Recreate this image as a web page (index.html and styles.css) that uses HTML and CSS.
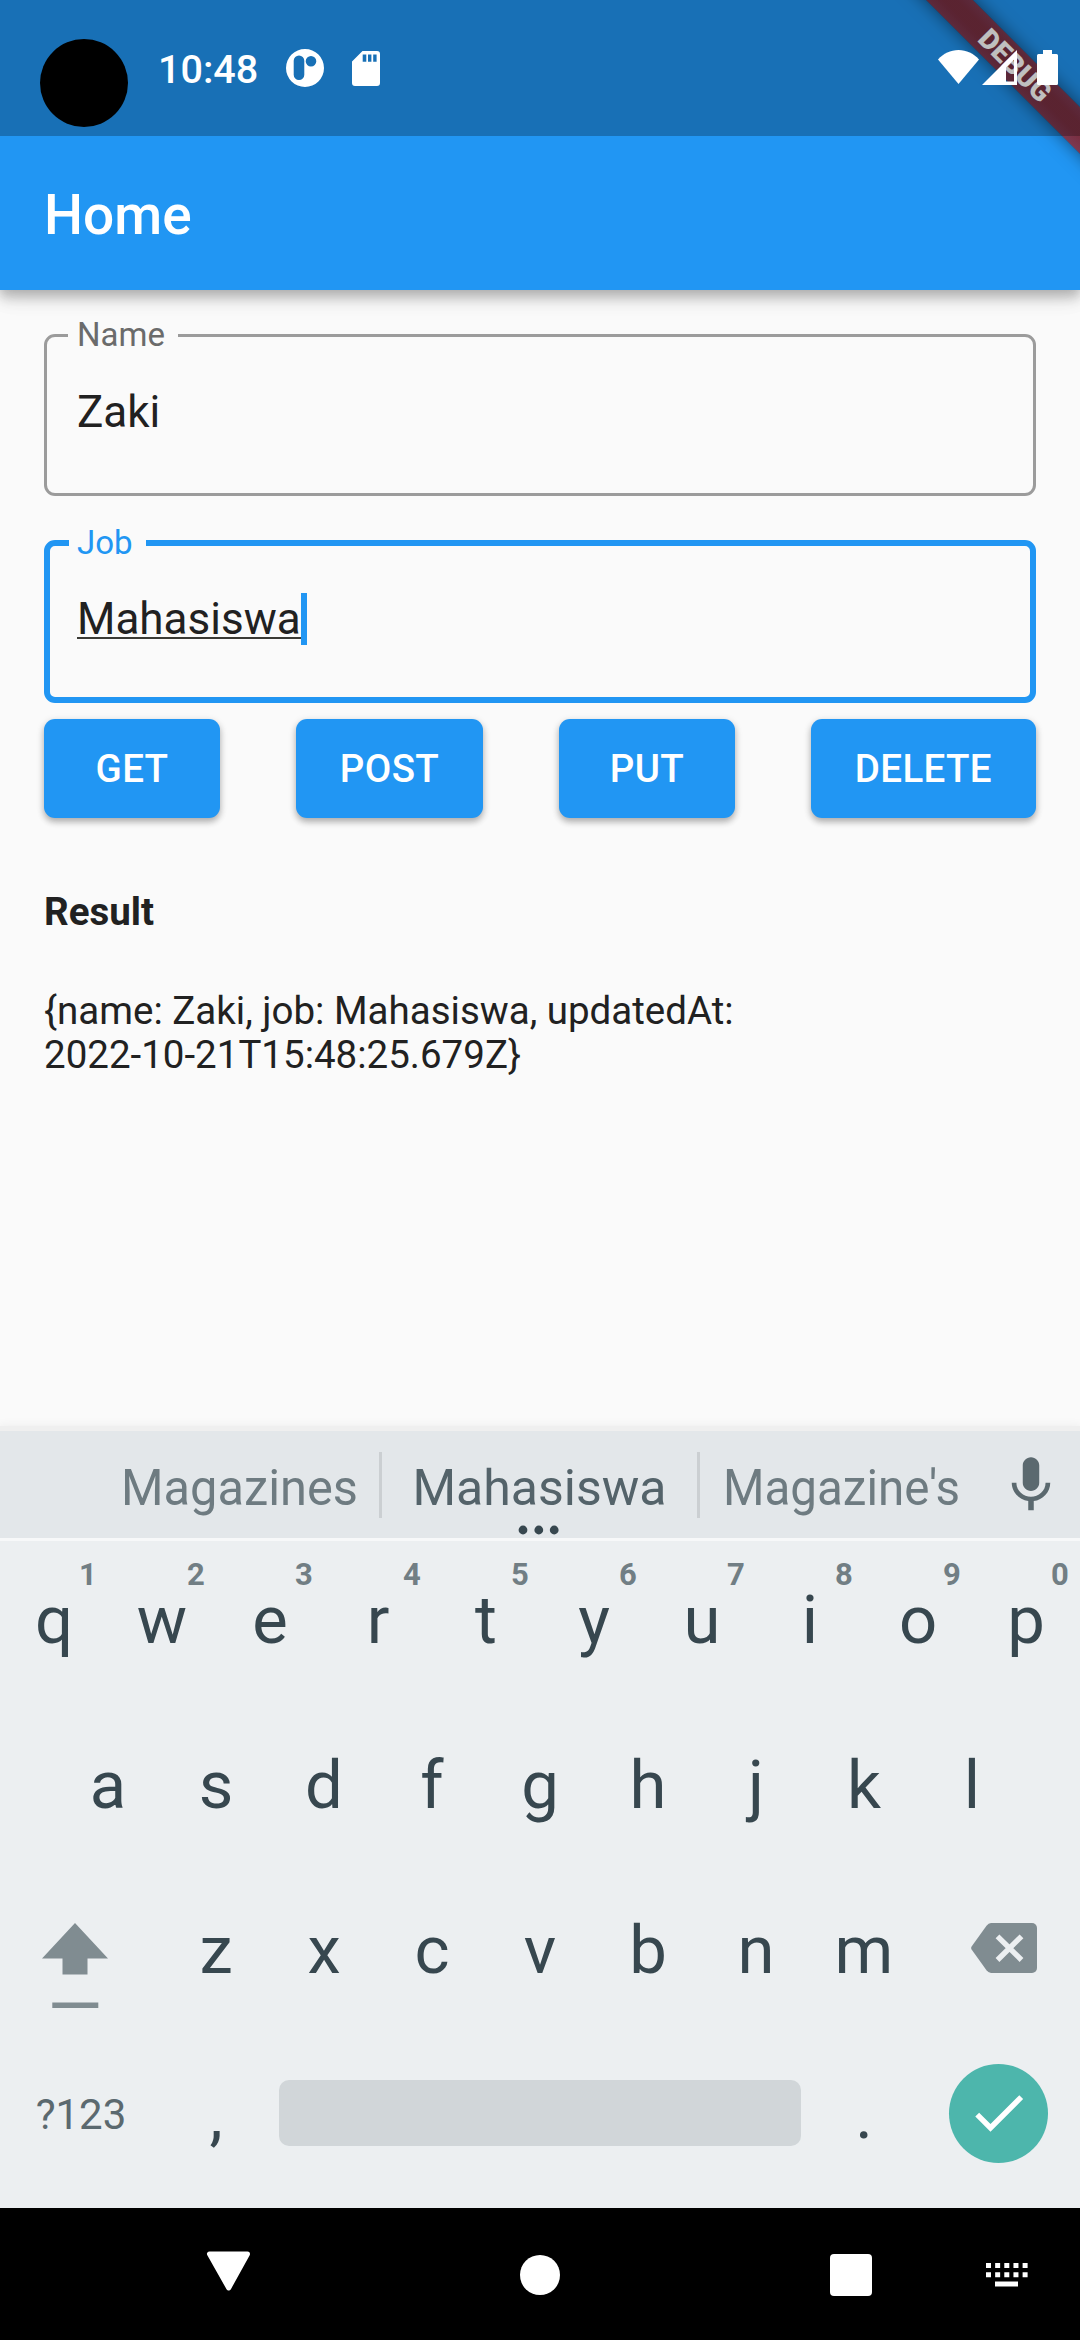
FILE: index.html
```html
<!DOCTYPE html>
<html lang="en">
<head>
<meta charset="utf-8">
<title>Home</title>
<link rel="stylesheet" href="styles.css">
</head>
<body>
<div class="screen">
  <header class="top">
    <div class="banner"><span>DEBUG</span></div>
    <div class="status">
      <i class="camera"></i>
      <span class="clock">10:48</span>
      <svg class="pocket" width="38" height="38" viewBox="0 0 38 38"><path fill="#fff" fill-rule="evenodd" d="M19 0a19 19 0 1 1 0 38a19 19 0 0 1 0-38zM13 6.500a5.300 5.300 0 0 0-5.300 5.300v14a5.300 5.300 0 0 0 10.600 0v-14A5.300 5.300 0 0 0 13 6.500zM25 6.900a5.300 5.300 0 1 0 0 10.600a5.300 5.300 0 0 0 0-10.600z"/></svg>
      <svg class="sd" width="28" height="35" viewBox="0 0 28 35"><path fill="#fff" fill-rule="evenodd" d="M10.500 0H25a3 3 0 0 1 3 3v29a3 3 0 0 1-3 3H3a3 3 0 0 1-3-3V10.500zM10.700 3.500v7.300h3.600V3.500zM16 3.500v7.300h3.400V3.500zM21.200 3.500v7.300h3.400V3.500z"/></svg>
      <div class="signals">
        <svg width="41" height="34" viewBox="0 0 41 34"><path fill="#fff" d="M20.500 34L0 9.500C5.500 3.500 12.500 0 20.500 0S35.500 3.500 41 9.500z"/></svg>
        <svg class="cell" width="35" height="35" viewBox="0 0 35 35"><path fill="#fff" fill-rule="evenodd" d="M35 0V35H0zM32 9.500L24 17.500V31.500H32z"/></svg>
        <svg class="battery" width="21" height="35" viewBox="0 0 21 35"><path fill="#fff" d="M6 0h9v4h4.500q1.500 0 1.500 1.500v28q0 1.500-1.500 1.500h-18Q0 35 0 33.500v-28Q0 4 1.500 4H6z"/></svg>
      </div>
    </div>
    <h1>Home</h1>
  </header>

  <main>
    <fieldset class="field">
      <legend>Name</legend>
      <div class="value">Zaki</div>
    </fieldset>
    <fieldset class="field focused">
      <legend>Job</legend>
      <div class="value"><span class="composing">Mahasiswa</span><i class="caret"></i></div>
    </fieldset>
    <div class="buttons">
      <button>GET</button><button>POST</button><button>PUT</button><button>DELETE</button>
    </div>
    <h2>Result</h2>
    <p>{name: Zaki, job: Mahasiswa, updatedAt:<br>2022-10-21T15:48:25.679Z}</p>
  </main>

  <section class="keyboard">
    <div class="suggestions">
      <span class="left">Magazines</span><i></i>
      <span class="best">Mahasiswa<svg class="more" width="42" height="10" viewBox="0 0 42 10"><g fill="#37474f"><circle cx="5" cy="5" r="4.400"/><circle cx="20.800" cy="5" r="4.400"/><circle cx="36.200" cy="5" r="4.400"/></g></svg></span><i></i>
      <span class="right">Magazine's</span>
      <svg class="mic" width="66" height="66" viewBox="0 0 24 24"><path fill="#5b696f" d="M12 14.500c1.660 0 2.990-1.340 2.990-3L15 5.300c0-1.660-1.340-3-3-3S9 3.640 9 5.300v6.200c0 1.660 1.340 3 3 3zm5.300-3c0 3-2.540 5.100-5.300 5.100s-5.300-2.100-5.300-5.100H5c0 3.410 2.720 6.230 6 6.720V21.500h2v-3.280c3.280-.48 6-3.300 6-6.720h-1.700z"/></svg>
    </div>
    <div class="row">
      <kbd>q<sup>1</sup></kbd><kbd>w<sup>2</sup></kbd><kbd>e<sup>3</sup></kbd><kbd>r<sup>4</sup></kbd><kbd>t<sup>5</sup></kbd><kbd>y<sup>6</sup></kbd><kbd>u<sup>7</sup></kbd><kbd>i<sup>8</sup></kbd><kbd>o<sup>9</sup></kbd><kbd>p<sup>0</sup></kbd>
    </div>
    <div class="row">
      <kbd>a</kbd><kbd>s</kbd><kbd>d</kbd><kbd>f</kbd><kbd>g</kbd><kbd>h</kbd><kbd>j</kbd><kbd>k</kbd><kbd>l</kbd>
    </div>
    <div class="row">
      <div class="side shift"><svg width="66" height="86" viewBox="0 0 66 86"><path fill="#808c91" d="M33 0L66 35.500H45.500V51.500H20.500V35.500H0zM10.300 79.500H56.300V85H10.300z"/></svg></div>
      <kbd>z</kbd><kbd>x</kbd><kbd>c</kbd><kbd>v</kbd><kbd>b</kbd><kbd>n</kbd><kbd>m</kbd>
      <div class="side erase"><svg width="66" height="50" viewBox="0 0 66 50"><path fill="#808c91" d="M20 0H61a5 5 0 0 1 5 5V45a5 5 0 0 1-5 5H20q-2.500 0-4.500-2.700L.6 26.500Q-.3 25 .6 23.500L15.500 2.700Q17.500 0 20 0z"/><path stroke="#eceff1" stroke-width="5.400" d="M26.500 13.300L50.500 37M50.500 13.300L26.500 37"/></svg></div>
    </div>
    <div class="row">
      <div class="side symbols">?123</div>
      <kbd>,</kbd>
      <div class="space"></div>
      <kbd>.</kbd>
      <div class="side enter"><div class="done"><svg width="65.300" height="65.300" viewBox="0 0 24 24"><path fill="#fff" d="M9 16.170L4.830 12l-1.420 1.410L9 19 21 7l-1.410-1.410z"/></svg></div></div>
    </div>
  </section>

  <nav>
    <svg class="back" width="46" height="41" viewBox="0 0 46 41"><path fill="#fff" stroke="#fff" stroke-width="5" stroke-linejoin="round" d="M3.500 3H41.500L22.700 37z"/></svg>
    <i class="home"></i>
    <i class="recent"></i>
    <svg class="ime" width="42" height="24" viewBox="0 0 42 24" fill="none" stroke="#fff"><path stroke-width="5" stroke-dasharray="5 4.150" d="M0 2.500H42M0 11.700H42"/><path stroke-width="5" d="M9 21H32"/></svg>
  </nav>
</div>
</body>
</html>
```
FILE: styles.css
```css
* { box-sizing: border-box; margin: 0; padding: 0; }
body { background: #fafafa; font-family: Roboto, "Liberation Sans", sans-serif; color: #212121; }
svg { display: block; flex: none; }
.screen { width: 1080px; height: 2340px; display: flex; flex-direction: column; overflow: hidden; }

/* Status bar and app bar */
.top { position: relative; height: 290px; flex: none; background: #2196f3; box-shadow: 0 5px 11px rgba(0,0,0,.2), 0 11px 14px rgba(0,0,0,.10), 0 3px 27px rgba(0,0,0,.08); }
.status { position: relative; height: 136px; display: flex; align-items: flex-start; background: rgba(0,0,0,.25); }
.camera { width: 88px; height: 88px; margin: 39px 0 0 40px; border-radius: 50%; background: #000; flex: none; }
.clock { margin: 45px 0 0 30px; width: 99px; font-size: 39.500px; font-weight: 500; line-height: 50px; color: #fff; }
.pocket { margin: 49px 0 0 29px; }
.sd { margin: 51px 0 0 28px; }
.signals { display: flex; margin: 50px 22px 0 auto; }
.cell { margin: 0 0 0 3px; }
.battery { margin-left: 20px; }
.banner { position: absolute; inset: 0 0 auto auto; width: 220px; height: 290px; overflow: hidden; }
.banner span { position: absolute; left: -65px; top: 49px; width: 440px; height: 33px; line-height: 33px; text-align: center; transform: rotate(45deg); transform-origin: center; font-size: 28px; font-weight: 900; color: #fff; background: linear-gradient(rgba(183,28,28,.627), rgba(183,28,28,.627)), linear-gradient(rgba(0,0,0,.3), rgba(0,0,0,.47) 35%, rgba(0,0,0,.47) 65%, rgba(0,0,0,.3)); box-shadow: 0 0 17px rgba(0,0,0,.5); }
h1 { padding: 47px 44px 0; font-size: 55px; font-weight: 500; line-height: 64px; color: #fff; }

/* Form */
main { flex: 1; padding: 26px 44px 0; }
.field { height: 180px; min-width: 0; border: 3px solid #9b9b9b; border-radius: 11px; padding: 0 30px 0 21px; }
.field legend { height: 39px; padding: 0 13px 0 9px; font-size: 33px; line-height: 37px; color: #6b6b6b; }
.field .value { display: flex; align-items: flex-start; padding: 31px 0 0 9px; font-size: 44px; line-height: 52px; }
.focused { margin-top: 27px; border: 6px solid #2196f3; padding-left: 19px; }
.focused legend { height: 40px; padding-left: 8px; line-height: 40px; color: #2196f3; }
.focused .value { padding: 30px 0 0 8px; }
.composing { height: 46px; border-bottom: 2px solid #3a3a35; }
.caret { width: 6px; height: 52px; background: #2196f3; }
.buttons { display: flex; justify-content: space-between; margin-top: 16px; }
button { min-width: 176px; height: 99px; padding: 0 44px; border: 0; border-radius: 11px; background: #2196f3; color: #fff; font: 500 38.500px/99px Roboto, sans-serif; letter-spacing: .35px; box-shadow: 0 4px 6px rgba(0,0,0,.24), 0 2px 9px rgba(0,0,0,.12); }
h2 { margin-top: 71px; font-size: 38.500px; font-weight: 700; line-height: 45px; }
p { margin-top: 55px; font-size: 38.500px; line-height: 44px; }

/* Keyboard */
.keyboard { height: 777px; flex: none; background: #eceff1; box-shadow: 0 -5px 0 #efefef, 0 -5px 9px 1px rgba(0,0,0,.05); color: #37474f; }
.suggestions { display: grid; grid-template-columns: 281px 3px 315px 3px 283px 97px; height: 110px; padding-left: 98px; background: #e3e7ea; border-bottom: 3px solid #f7f8f9; }
.suggestions span { padding-top: 27px; text-align: center; font-size: 50px; line-height: 60px; color: #6e7b81; }
.suggestions .left { transform: scaleX(.975); padding-left: 2px; }
.suggestions .right { transform: scaleX(.95); }
.suggestions i { height: 66px; margin-top: 21px; background: #cbcfd2; }
.suggestions .best { position: relative; color: #54636a; }
.more { position: absolute; left: 136px; bottom: 3px; }
.mic { margin: 20px 0 0 14.500px; }
.row { display: flex; justify-content: center; height: 165px; }
kbd { position: relative; width: 108px; padding-top: 40px; text-align: center; font: 400 67px/78px Roboto, sans-serif; }
kbd sup { position: absolute; left: 68px; top: 16px; width: 40px; text-align: center; font-size: 31px; font-weight: 700; line-height: 36px; color: #717e84; }
.side { width: 162px; }
.shift { padding: 52px 0 0 42px; }
.erase { padding: 52px 0 0 53px; }
.symbols { padding: 53px 0 0 0; text-align: center; font-size: 42px; line-height: 52px; color: #5b696f; }
.space { width: 522px; height: 66px; margin: 44px 9px 0; border-radius: 10px; background: #d1d6d9; }
.done { width: 99px; height: 99px; margin: 28px 0 0 31px; padding: 15.500px 0 0 16.800px; border-radius: 50%; background: #4db6ac; }

/* System navigation */
nav { display: flex; align-items: flex-start; height: 132px; flex: none; background: #000; }
.back { margin: 43px 0 0 206px; }
.home { width: 40px; height: 40px; margin: 47px 0 0 268px; border-radius: 50%; background: #fff; }
.recent { width: 41.500px; height: 41.500px; margin: 46px 0 0 270px; border-radius: 4px; background: #fff; }
.ime { margin: 55px 0 0 114.500px; }
```
